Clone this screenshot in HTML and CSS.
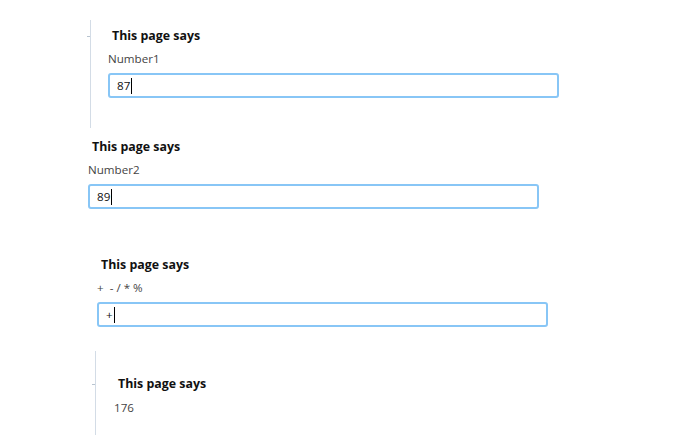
FILE: index.html
```html
<!DOCTYPE html>
<html>
<head>
<meta charset="utf-8">
<link rel="stylesheet" href="styles.css">
</head>
<body>
<div class="page">
  <section class="dialog d1 ruled">
    <div class="title">This page says</div>
    <div class="label">Number1</div>
    <div class="field">87<span class="caret"></span></div>
  </section>
  <section class="dialog d2">
    <div class="title">This page says</div>
    <div class="label">Number2</div>
    <div class="field">89<span class="caret"></span></div>
  </section>
  <section class="dialog d3">
    <div class="title">This page says</div>
    <div class="label">+&nbsp; - / * %</div>
    <div class="field">+<span class="caret"></span></div>
  </section>
  <section class="dialog d4 ruled">
    <div class="title">This page says</div>
    <div class="label">176</div>
  </section>
</div>
</body>
</html>
```

FILE: styles.css
```css
html, body {
  margin: 0;
  padding: 0;
  background: #ffffff;
}
body {
  width: 699px;
  height: 435px;
  overflow: hidden;
  font-family: "Open Sans", "Noto Sans", sans-serif;
}
.page {
  display: flex;
  flex-direction: column;
}
.dialog {
  display: flex;
  flex-direction: column;
  position: relative;
}
.ruled {
  border-left: 1px solid #d3dce6;
}
.ruled::before {
  content: "";
  position: absolute;
  left: -4px;
  width: 3px;
  height: 1px;
  background: #b8c4d0;
}
.title {
  font-size: 12.4px;
  line-height: 18px;
  font-weight: 700;
  color: #111;
  padding-left: 4px;
  padding-top: 2px;
}
.label {
  font-size: 11.6px;
  line-height: 16px;
  color: #444;
  margin-top: 6px;
}
.field {
  box-sizing: border-box;
  width: 451px;
  height: 25px;
  margin-top: 6px;
  border: 2px solid #88c6f6;
  border-radius: 3px;
  padding: 0 7px;
  font-size: 11.6px;
  line-height: 21px;
  color: #111;
  display: flex;
  align-items: center;
}
.caret {
  display: inline-block;
  width: 1px;
  height: 16px;
  background: #000;
  margin-left: 1px;
}
.d1 {
  margin-top: 20px;
  margin-left: 90px;
  padding-left: 17px;
  padding-top: 5px;
  height: 108px;
  box-sizing: border-box;
}
.d1::before { top: 16px; }
.d2 {
  margin-top: 8px;
  margin-left: 88px;
}
.d3 {
  margin-top: 45px;
  margin-left: 97px;
}
.d4 {
  margin-top: 24px;
  margin-left: 95px;
  padding-left: 18px;
  padding-top: 22px;
  height: 84px;
  box-sizing: border-box;
}
.d4 .label { margin-top: 7px; }
.d4::before { top: 33px; }
```
